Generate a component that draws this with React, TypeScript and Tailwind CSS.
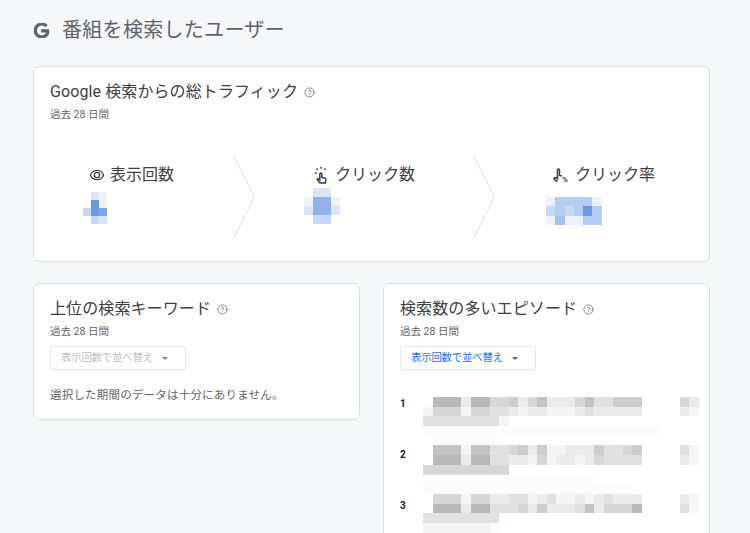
import { CircleHelp } from 'lucide-react'

// blurred numbers in the top card: digit 0-9, 0 is white
const impressions = ['021', '081', '387', '032']
const clicks = ['0220', '1661', '2662', '0330']
const ctr = ['144441', '343484', '151144']

// blurred episode list, one string per 9.7px row
const episodes = [
  '07772774452462224633555000042',
  '14441443321221112322222000021',
  '33333333100000000000000000000',
  '.........................',
  '0.......',
  '06661663345251122253345000031',
  '07772773322141221243333000021',
  '44444444400000000000000000000',
  '..................',
  '......................',
  '04441442233123112123222000021',
  '07772773334252223624447000031',
  '33333333.',
  '1111111.',
]

function blue(d: number) {
  const t = d / 9
  return `rgb(${Math.round(255 - 165 * t)}, ${Math.round(255 - 115 * t)}, ${Math.round(255 - 30 * t)})`
}

function grey(c: string) {
  if (c === '.') return 'rgb(252, 252, 252)'
  const v = 255 - Number(c) * 10
  return `rgb(${v}, ${v}, ${v})`
}

function BlueBlur({ rows, size }: { rows: string[]; size: string }) {
  return (
    <div className="flex flex-col blur-[0.5px]">
      {rows.map((r, i) => (
        <div key={i} className="flex">
          {r.split('').map((c, j) => (
            <div key={j} style={{ width: size, height: size, background: blue(Number(c)) }} />
          ))}
        </div>
      ))}
    </div>
  )
}

function Help() {
  return <CircleHelp size={11} strokeWidth={1.6} className="text-[#5f6368] ml-[6px] mt-[1px]" />
}

function Chevron() {
  return (
    <svg width="22" height="84" viewBox="0 0 22 84" fill="none" className="shrink-0">
      <path d="M0.5 0.5L21.5 42L0.5 83.5" stroke="#e0e0e0" strokeWidth="1" />
    </svg>
  )
}

function EyeIcon() {
  return (
    <svg width="16" height="16" viewBox="0 0 24 24" fill="#3c4043">
      <path d="M12 6a9.77 9.77 0 0 1 8.82 6A9.77 9.77 0 0 1 12 18a9.77 9.77 0 0 1-8.82-6A9.77 9.77 0 0 1 12 6m0-2C7 4 2.73 7.11 1 12c1.73 4.89 6 8 11 8s9.27-3.11 11-8c-1.73-4.89-6-8-11-8zm0 5a3 3 0 1 1 0 6 3 3 0 0 1 0-6m0-2a5 5 0 1 0 0 10 5 5 0 0 0 0-10z" />
    </svg>
  )
}

function TouchIcon() {
  return (
    <svg width="16" height="18" viewBox="0 0 16 18" fill="none" stroke="#3c4043" strokeWidth="1.5">
      <path d="M7 17l-2.600-3.200c-.6-.8.4-1.700 1.200-1l1.200 1V8a1 1 0 0 1 2 0v3.500l3 .6c.7.2 1.100.7 1 1.400L12.400 17z" />
      <path d="M8 1v1.800M3.500 2.500l1.200 1.200M12.500 2.500l-1.200 1.200M2 7h1.800" />
    </svg>
  )
}

function PercentHandIcon() {
  return (
    <div className="relative w-[16px] h-[16px]">
      <svg width="13" height="16" viewBox="0 0 13 16" fill="none" stroke="#3c4043" strokeWidth="1.5">
        <path d="M4.500 14.500C2.500 13.500 1 12.500 1 11.500c0-.8 1-1 2-.5l1.500.8V3a1 1 0 0 1 2 0v5.500l2.500.5" />
      </svg>
      <span className="absolute left-[9px] top-[9px] text-[8px] leading-[8px] font-bold text-[#3c4043]">%</span>
    </div>
  )
}

function SortSelect({ disabled }: { disabled?: boolean }) {
  return (
    <div className="w-[136px] h-[24px] mt-[7px] flex items-center pl-[10px] border border-[#e3e5e8] rounded-[2px] bg-white">
      <span className={`text-[10.5px] leading-none tracking-[-0.3px] ${disabled ? 'text-[#bdc1c6]' : 'text-[#1a73e8]'}`}>表示回数で並べ替え</span>
      <span className={`ml-[9px] w-0 h-0 border-x-[3px] border-x-transparent border-t-[3px] ${disabled ? 'border-t-[#80868b]' : 'border-t-[#5f6368]'}`} />
    </div>
  )
}

function CardHead({ title }: { title: string }) {
  return (
    <>
      <div className="flex items-center h-[22px]">
        <h2 className="text-[16px] leading-[22px] tracking-[0.1px] text-[#3c4043] font-normal">{title}</h2>
        <Help />
      </div>
      <p className="text-[10.5px] leading-[14px] text-[#5f6368] mt-[5px]">過去 28 日間</p>
    </>
  )
}

export default function App() {
  return (
    <div
      className="w-[750px] h-[533px] overflow-hidden bg-[#f6f7f9] pl-[33px] pr-[40px]"
      style={{ fontFamily: 'Roboto, "Noto Sans CJK JP", sans-serif' }}
    >
      {/* Header */}
      <div className="flex items-center h-[66px] pb-[6px]">
        <svg width="15" height="15" viewBox="0 0 24 24" fill="#5f6368" stroke="#5f6368" strokeWidth="1.800" className="ml-[1px]">
          <path d="M12.48 10.92v3.28h7.84c-.24 1.84-.853 3.187-1.787 4.133-1.147 1.147-2.933 2.4-6.053 2.4-4.827 0-8.6-3.893-8.6-8.72s3.773-8.72 8.6-8.72c2.6 0 4.507 1.027 5.907 2.347l2.307-2.307C18.747 1.44 16.133 0 12.48 0 5.867 0 .307 5.387.307 12s5.56 12 12.173 12c3.573 0 6.267-1.173 8.373-3.36 2.16-2.16 2.84-5.213 2.84-7.667 0-.76-.053-1.467-.173-2.053H12.48z" />
        </svg>
        <h1 className="ml-[13px] text-[20px] leading-[28px] tracking-[0.3px] font-normal text-[#5f6368]">番組を検索したユーザー</h1>
      </div>

      {/* Total traffic */}
      <section className="h-[196px] bg-white border border-[#dadce0] rounded-[6px] px-[16px] pt-[14px]">
        <CardHead title="Google 検索からの総トラフィック" />
        <div className="flex mt-[33px]">
          <div className="w-[183px] pl-[33px] shrink-0 pt-[8px]">
            <div className="flex items-center gap-[5px] h-[24px] pl-[6px]">
              <EyeIcon />
              <span className="text-[16px] leading-[24px] text-[#3c4043]">表示回数</span>
            </div>
            <div className="mt-[5px]">
              <BlueBlur rows={impressions} size="8px" />
            </div>
          </div>
          <Chevron />
          <div className="w-[218px] pl-[49px] shrink-0 pt-[8px]">
            <div className="flex items-center gap-[6px] h-[24px] pl-[9px]">
              <TouchIcon />
              <span className="text-[16px] leading-[24px] text-[#3c4043]">クリック数</span>
            </div>
            <div className="mt-[1px]">
              <BlueBlur rows={clicks} size="9px" />
            </div>
          </div>
          <Chevron />
          <div className="pl-[51px] shrink-0 pt-[8px]">
            <div className="flex items-center gap-[6px] h-[24px] pl-[7px]">
              <PercentHandIcon />
              <span className="text-[16px] leading-[24px] text-[#3c4043]">クリック率</span>
            </div>
            <div className="mt-[10px]">
              <BlueBlur rows={ctr} size="9.300px" />
            </div>
          </div>
        </div>
      </section>

      <div className="flex items-start gap-[23px] mt-[21px]">
        {/* Keywords */}
        <section className="w-[327px] h-[137px] shrink-0 bg-white border border-[#dadce0] rounded-[6px] px-[16px] pt-[14px]">
          <CardHead title="上位の検索キーワード" />
          <SortSelect disabled />
          <p className="mt-[17px] text-[11.500px] leading-[16px] tracking-[0.2px] text-[#5f6368]">選択した期間のデータは十分にありません。</p>
        </section>

        {/* Episodes */}
        <section className="w-[327px] h-[300px] shrink-0 bg-white border border-[#dadce0] rounded-[6px] px-[16px] pt-[14px]">
          <CardHead title="検索数の多いエピソード" />
          <SortSelect />
          <div className="flex mt-[27px]">
            <div className="w-[23px] shrink-0 flex flex-col">
              {['1', '2', '3'].map((n) => (
                <div key={n} className="h-[51px] text-[10px] leading-[14px] font-bold text-[#202124]">{n}</div>
              ))}
            </div>
            <div className="flex flex-col blur-[0.5px]">
              {episodes.map((r, i) => (
                <div key={i} className="flex h-[9.700px]">
                  {r.split('').map((c, j) => (
                    <div key={j} className="w-[9.500px] h-full" style={{ background: grey(c) }} />
                  ))}
                </div>
              ))}
            </div>
          </div>
        </section>
      </div>
    </div>
  )
}
